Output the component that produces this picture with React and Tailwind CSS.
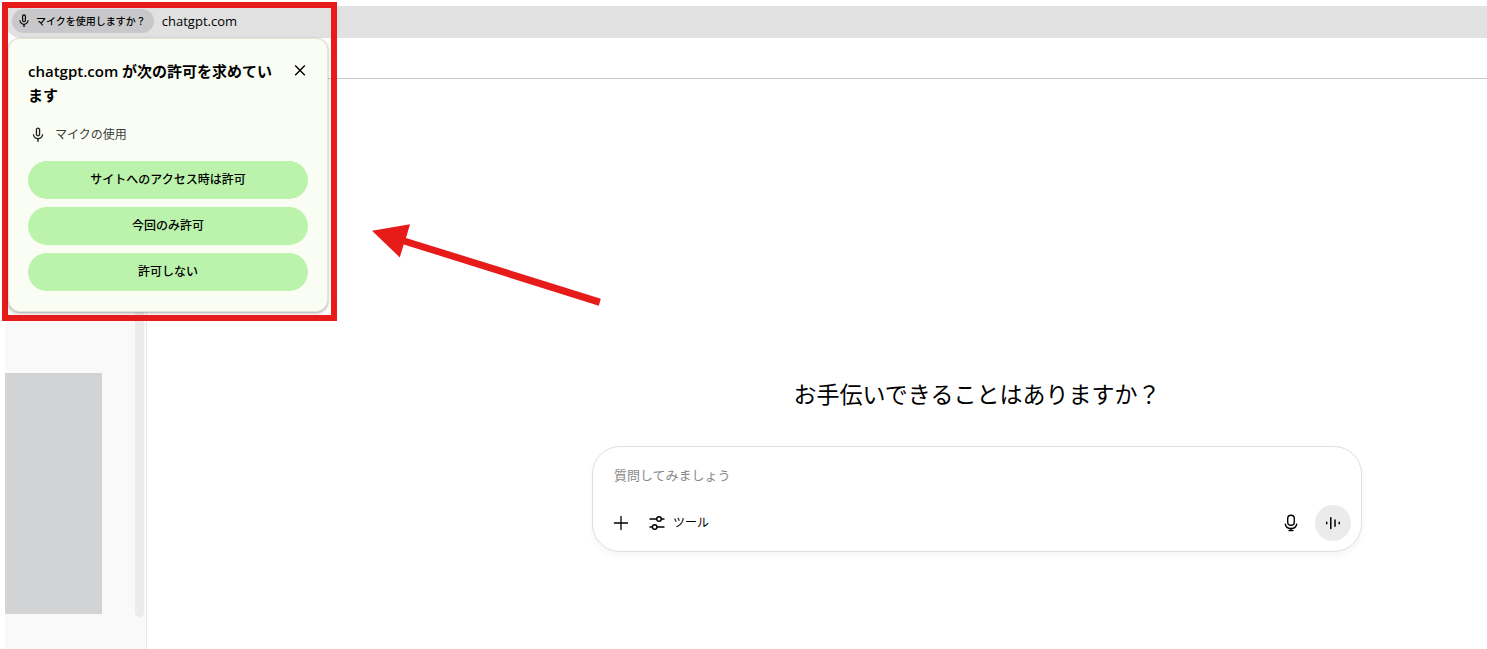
import { useState } from "react";
import { MdMicNone } from "react-icons/md";

const permissionChoices = [
  { id: "always", label: "サイトへのアクセス時は許可" },
  { id: "once", label: "今回のみ許可" },
  { id: "never", label: "許可しない" },
];

function CloseIcon() {
  return (
    <svg className="h-4 w-4" viewBox="0 0 16 16" fill="none" stroke="currentColor" strokeWidth="1.4">
      <path d="M3.2 2.6l9.6 9.6M12.8 2.6l-9.6 9.6" />
    </svg>
  );
}

function PlusIcon() {
  return (
    <svg className="h-4 w-4" viewBox="0 0 16 16" fill="none" stroke="currentColor" strokeWidth="1.3" strokeLinecap="round">
      <path d="M8 1.4v13.2M1.4 8h13.2" />
    </svg>
  );
}

function SlidersIcon() {
  return (
    <svg className="h-4 w-4" viewBox="0 0 16 16" fill="none" stroke="currentColor" strokeWidth="1.4" strokeLinecap="round">
      <path d="M1 4h6.6M12.4 4H15M1 12h2.3M8.1 12H15" />
      <circle cx="10" cy="4" r="2.3" />
      <circle cx="5.7" cy="12" r="2.3" />
    </svg>
  );
}

function DictateIcon() {
  return (
    <svg className="h-5 w-5" viewBox="0 0 20 20" fill="none" stroke="currentColor" strokeWidth="1.4" strokeLinecap="round">
      <rect x="6.7" y="2.3" width="6.6" height="10" rx="3.3" />
      <path d="M4.3 11.2a5.9 5.9 0 0 0 11.4 0" />
      <path d="M10 15.3v2M8 17.5h4" />
    </svg>
  );
}

function VoiceIcon() {
  return (
    <svg className="h-5 w-5" viewBox="0 0 20 20" fill="none" stroke="currentColor" strokeWidth="1.5" strokeLinecap="round">
      <path d="M3.7 9.2v1.6M7.8 4.8v10.6M12 7v6.2M16.2 9.2v1.6" />
    </svg>
  );
}

function AddressBar() {
  return (
    <header className="flex h-8 items-start gap-2 rounded-bl-2xl bg-[#e1e1e1] pt-[3px] pl-[7px]">
      <button
        type="button"
        className="flex h-6 items-center gap-1 rounded-full bg-[#c8c8ca] pr-2 pl-1 text-[10px] font-medium whitespace-nowrap"
      >
        <MdMicNone className="h-4 w-4" />
        マイクを使用しますか？
      </button>
      <span className="text-[13px] leading-6">chatgpt.com</span>
    </header>
  );
}

function PermissionPrompt({ onChoose }) {
  return (
    <section
      role="dialog"
      aria-labelledby="permission-title"
      className="w-80 rounded-xl border border-[#e6e4d3] bg-[#fafdf4] px-[19px] py-5 shadow-[0_1px_3px_rgba(0,0,0,0.35)]"
    >
      <div className="flex items-start gap-4">
        <h2 id="permission-title" className="flex-1 text-[15px] leading-6 font-semibold">
          chatgpt.com が次の許可を求めています
        </h2>
        <button type="button" aria-label="閉じる" className="flex h-6 items-center" onClick={() => onChoose("dismiss")}>
          <CloseIcon />
        </button>
      </div>

      <p className="mt-4 mb-3.5 flex h-6 items-center gap-2 pl-px text-[12px] text-[#3c3c3c]">
        <MdMicNone className="h-[18px] w-[18px] text-[#222222]" />
        マイクの使用
      </p>

      <div className="flex flex-col gap-2">
        {permissionChoices.map((choice) => (
          <button
            key={choice.id}
            type="button"
            className="h-[38px] rounded-full bg-[#bbf2ac] text-[12px] font-medium"
            onClick={() => onChoose(choice.id)}
          >
            {choice.label}
          </button>
        ))}
      </div>
    </section>
  );
}

function Sidebar() {
  return (
    <aside className="flex w-[142px] shrink-0 justify-between border-r border-[#e8e8e8] bg-[#f9f9f9] pr-0.5">
      <div className="mt-[294px] h-[241px] w-[97px] bg-[#d2d3d5]" />
      <div className="h-[538px] w-[9px] rounded-full bg-[#ebebeb]" />
    </aside>
  );
}

function Composer() {
  const [message, setMessage] = useState("");

  return (
    <form
      className="w-full max-w-[770px] rounded-[28px] border border-[#dedede] bg-white p-2.5 shadow-[0_4px_6px_rgba(0,0,0,0.04)]"
      onSubmit={(e) => e.preventDefault()}
    >
      <input
        type="text"
        aria-label="質問"
        placeholder="質問してみましょう"
        className="mt-1.5 block h-6 w-full px-[11px] text-[13px] outline-none placeholder:text-[#8a8a8a]"
        value={message}
        onChange={(e) => setMessage(e.target.value)}
      />
      <div className="mt-[18px] flex h-9 items-center">
        <button type="button" aria-label="追加" className="flex h-9 w-9 items-center justify-center">
          <PlusIcon />
        </button>
        <button type="button" className="flex h-9 items-center gap-2 px-2.5 text-[12px]">
          <SlidersIcon />
          ツール
        </button>
        <div className="ml-auto flex gap-1.5">
          <button type="button" aria-label="音声入力" className="flex h-9 w-9 items-center justify-center">
            <DictateIcon />
          </button>
          <button
            type="button"
            aria-label="音声モード"
            className="flex h-9 w-9 items-center justify-center rounded-full bg-[#ebebeb]"
          >
            <VoiceIcon />
          </button>
        </div>
      </div>
    </form>
  );
}

function App() {
  const [choice, setChoice] = useState(null);

  return (
    <div className="relative flex min-h-screen flex-col bg-white pt-1.5 pl-[5px] font-['Open_Sans','Noto_Sans_CJK_JP',sans-serif] text-black">
      <AddressBar />
      <div className="h-[41px] border-b border-[#c9c9c9]" />

      <div className="flex flex-1">
        <Sidebar />
        <main className="flex flex-1 flex-col items-center pt-[297px] pl-80">
          <h1 className="mb-[34px] text-[23px] leading-9 whitespace-nowrap">お手伝いできることはありますか？</h1>
          <Composer />
        </main>
      </div>

      {/* Highlighted permission prompt */}
      <div className="absolute top-0.5 left-0.5 border-[6px] border-[#e81b1b] pt-[30px] pr-[3px] pb-[3px]">
        {choice === null && <PermissionPrompt onChoose={setChoice} />}
      </div>

      {/* Arrow */}
      <svg className="pointer-events-none absolute top-[220px] left-[370px] h-[90px] w-[234px]" viewBox="370 220 234 90">
        <path
          fill="#e81b1b"
          d="M372 230.7L410 224.3L406 237.9L600.8 298.7L598.8 305.7L403.7 244.4L399.8 257.4Z"
        />
      </svg>
    </div>
  );
}

export default App;
